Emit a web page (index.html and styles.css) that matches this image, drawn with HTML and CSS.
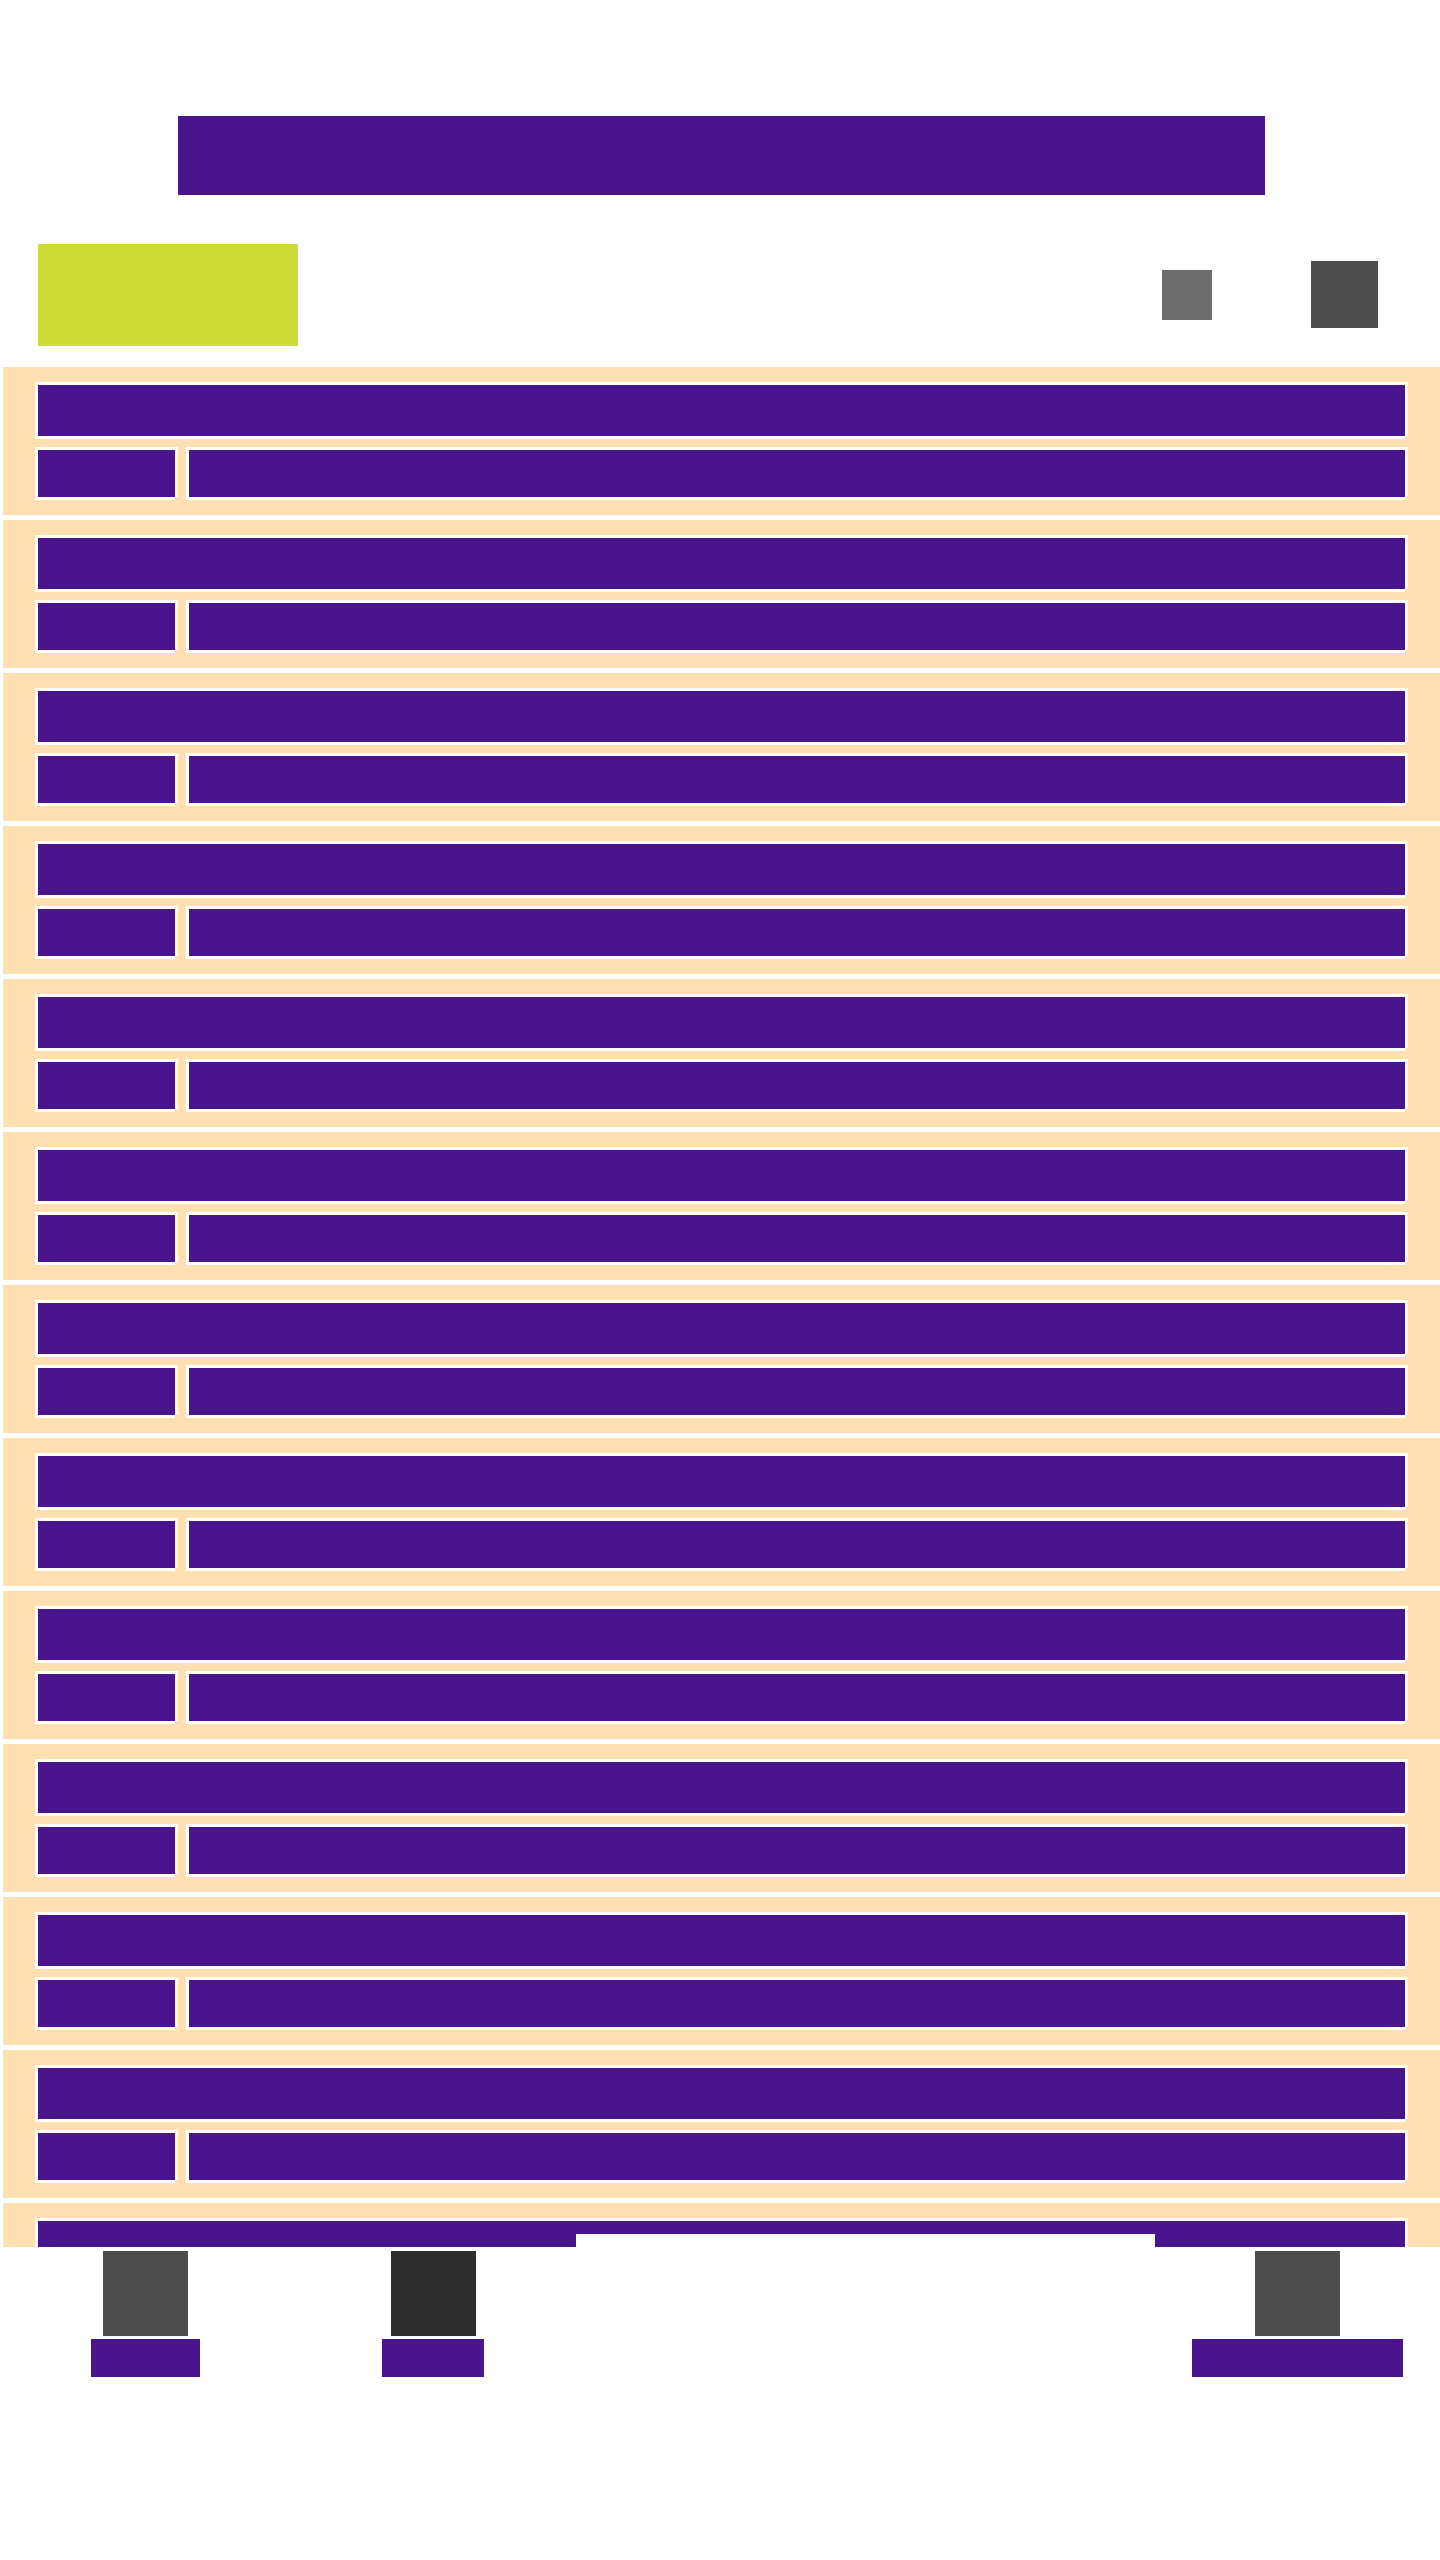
FILE: index.html
```html
<!DOCTYPE html>
<html lang="en">
<head>
<meta charset="utf-8">
<title>Listing</title>
<link rel="stylesheet" href="styles.css">
</head>
<body>
<div class="page">
  <header class="masthead"><div class="banner"></div></header>
  <div class="toolbar">
    <div class="logo"></div>
    <div class="actions">
      <div class="action-small"></div>
      <div class="action-large"></div>
    </div>
  </div>
  <main class="list">
    <article class="row"><div class="cell cell-title"></div><div class="meta"><div class="cell cell-tag"></div><div class="cell cell-desc"></div></div></article>
    <article class="row"><div class="cell cell-title"></div><div class="meta"><div class="cell cell-tag"></div><div class="cell cell-desc"></div></div></article>
    <article class="row"><div class="cell cell-title"></div><div class="meta"><div class="cell cell-tag"></div><div class="cell cell-desc"></div></div></article>
    <article class="row"><div class="cell cell-title"></div><div class="meta"><div class="cell cell-tag"></div><div class="cell cell-desc"></div></div></article>
    <article class="row"><div class="cell cell-title"></div><div class="meta"><div class="cell cell-tag"></div><div class="cell cell-desc"></div></div></article>
    <article class="row"><div class="cell cell-title"></div><div class="meta"><div class="cell cell-tag"></div><div class="cell cell-desc"></div></div></article>
    <article class="row"><div class="cell cell-title"></div><div class="meta"><div class="cell cell-tag"></div><div class="cell cell-desc"></div></div></article>
    <article class="row"><div class="cell cell-title"></div><div class="meta"><div class="cell cell-tag"></div><div class="cell cell-desc"></div></div></article>
    <article class="row"><div class="cell cell-title"></div><div class="meta"><div class="cell cell-tag"></div><div class="cell cell-desc"></div></div></article>
    <article class="row"><div class="cell cell-title"></div><div class="meta"><div class="cell cell-tag"></div><div class="cell cell-desc"></div></div></article>
    <article class="row"><div class="cell cell-title"></div><div class="meta"><div class="cell cell-tag"></div><div class="cell cell-desc"></div></div></article>
    <article class="row"><div class="cell cell-title"></div><div class="meta"><div class="cell cell-tag"></div><div class="cell cell-desc"></div></div></article>
    <article class="row"><div class="cell cell-title"></div><div class="meta"><div class="cell cell-tag"></div><div class="cell cell-desc"></div></div></article>
  </main>
  <nav class="bottom-nav">
    <div class="sheet"></div>
    <div class="nav-item nav-first"><div class="nav-icon"></div><div class="nav-label label-first"></div></div>
    <div class="nav-item nav-second"><div class="nav-icon nav-icon-dark"></div><div class="nav-label label-second"></div></div>
    <div class="nav-item nav-third"><div class="nav-icon"></div><div class="nav-label label-third"></div></div>
  </nav>
</div>
</body>
</html>
```

FILE: styles.css
```css
* {
  box-sizing: border-box;
}

html,
body {
  margin: 0;
  background: #ffffff;
}

.page {
  min-height: 2560px;
  padding-top: 116px;
}

.masthead {
  padding: 0 175px 0 178px;
}

.banner {
  height: 79px;
  background: #4a148c;
}

.toolbar {
  display: flex;
  align-items: center;
  height: 102px;
  margin-top: 49px;
  padding: 0 62px 0 38px;
}

.logo {
  width: 260px;
  height: 102px;
  background: #cddc39;
}

.actions {
  display: flex;
  align-items: flex-start;
  gap: 99px;
  height: 67px;
  margin-left: auto;
  margin-bottom: 1px;
}

.action-small {
  width: 50px;
  height: 50px;
  margin-top: 9px;
  background: #6d6d6d;
}

.action-large {
  width: 67px;
  height: 67px;
  background: #4d4d4d;
}

.list {
  display: flex;
  flex-direction: column;
  gap: 5px;
  height: 1880px;
  margin-top: 21px;
  margin-left: 3px;
  overflow: hidden;
}

.row {
  flex: none;
  display: flex;
  flex-direction: column;
  gap: 14px;
  height: 148px;
  padding: 18px 35px;
  background: #ffe0b2;
}

.meta {
  display: flex;
  gap: 14px;
}

.cell {
  background: #4a148c;
  box-shadow:
    -3px -3px 0 #ffffff,
    3px -3px 0 #ffffff,
    -3px 3px 0 #ffffff,
    3px 0 0 #ffffff,
    0 3px 0 #ffffff;
}

.cell-title {
  height: 51px;
}

.cell-tag {
  width: 137px;
  height: 47px;
}

.cell-desc {
  flex: 1;
  height: 47px;
}

.bottom-nav {
  position: relative;
  display: flex;
  margin-top: 4px;
  padding-left: 91px;
}

.sheet {
  position: absolute;
  top: -17px;
  left: 576px;
  width: 579px;
  height: 60px;
  background: #ffffff;
}

.nav-item {
  position: relative;
  display: flex;
  flex-direction: column;
  align-items: center;
  gap: 3px;
}

.nav-second {
  margin-left: 182px;
}

.nav-third {
  margin-left: 708px;
}

.nav-icon {
  width: 85px;
  height: 85px;
  background: #4d4d4d;
}

.nav-icon-dark {
  background: #2d2d2d;
}

.nav-label {
  height: 38px;
  background: #4a148c;
}

.label-first {
  width: 109px;
}

.label-second {
  width: 102px;
}

.label-third {
  width: 211px;
}
```
